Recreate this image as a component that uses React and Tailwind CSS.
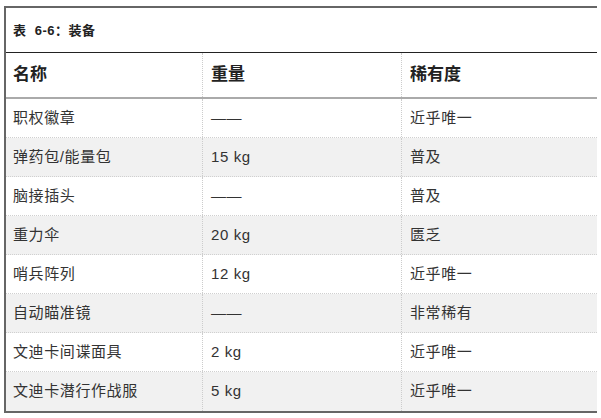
import React from 'react';

const rows = [
  ['职权徽章', '——', '近乎唯一'],
  ['弹药包/能量包', '15 kg', '普及'],
  ['脑接插头', '——', '普及'],
  ['重力伞', '20 kg', '匮乏'],
  ['哨兵阵列', '12 kg', '近乎唯一'],
  ['自动瞄准镜', '——', '非常稀有'],
  ['文迪卡间谍面具', '2 kg', '近乎唯一'],
  ['文迪卡潜行作战服', '5 kg', '近乎唯一'],
];

const font = { fontFamily: '"Liberation Sans", "Noto Sans CJK SC", sans-serif' };

export default function App() {
  return (
    <div className="w-[601px] h-[418px] bg-white pt-[6px] pl-[4px]" style={font}>
      <div className="w-[593px] border-t-2 border-l-2 border-b-2 border-[#666] bg-white">
        {/* Title */}
        <div className="h-[45px] flex items-center pl-[7px] pt-[2px] text-[13px] font-bold text-[#222] tracking-[0.5px] border-b border-[#222]">
          表&nbsp;&nbsp;6-6：装备
        </div>

        {/* Header */}
        <div className="grid grid-cols-[197px_199px_1fr] h-[46px] border-b-2 border-[#aaa] text-[17px] font-bold text-[#222]">
          <div className="flex items-center pl-[7px] border-r border-dotted border-[#ccc]">名称</div>
          <div className="flex items-center pl-[8px] border-r border-dotted border-[#ccc]">重量</div>
          <div className="flex items-center pl-[8px]">稀有度</div>
        </div>

        {/* Rows */}
        {rows.map((r, i) => (
          <div
            key={i}
            className={`grid grid-cols-[197px_199px_1fr] h-[39px] text-[15px] tracking-[0.6px] text-[#333] ${
              i % 2 === 1 ? 'bg-[#f1f1f1]' : 'bg-white'
            } ${i < rows.length - 1 ? 'border-b border-dotted border-[#d0d0d0]' : ''}`}
          >
            <div className="flex items-center pl-[7px] border-r border-dotted border-[#ccc]">{r[0]}</div>
            <div className="flex items-center pl-[8px] border-r border-dotted border-[#ccc]">{r[1]}</div>
            <div className="flex items-center pl-[8px]">{r[2]}</div>
          </div>
        ))}
      </div>
    </div>
  );
}
